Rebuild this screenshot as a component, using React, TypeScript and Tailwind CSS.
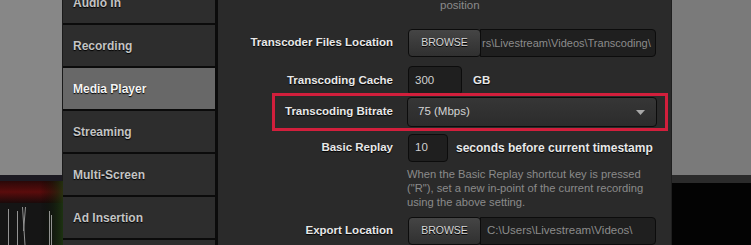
import React from "react";

const font = { fontFamily: '"Liberation Sans", Arial, sans-serif' };

const menu = ["Audio In", "Recording", "Media Player", "Streaming", "Multi-Screen", "Ad Insertion", "Web"];

function Label({ children, w = "w-[175px]" }: { children: React.ReactNode; w?: string }) {
  return (
    <div className={`${w} shrink-0 text-right text-[11.5px] font-bold text-[#e8e8e8] [text-shadow:0_1px_1px_#000]`}>
      {children}
    </div>
  );
}

function Browse() {
  return (
    <div className="w-[73px] h-[28px] shrink-0 rounded-[4px] border border-[#0c0c0c] bg-gradient-to-b from-[#454545] to-[#303030] flex items-center justify-center text-[10.5px] text-[#d8d8d8] [text-shadow:0_1px_0_#000]">
      BROWSE
    </div>
  );
}

export default function App() {
  return (
    <div className="w-[751px] h-[245px] flex overflow-hidden bg-black" style={font}>
      {/* left preview */}
      <div className="w-[63px] shrink-0 flex flex-col border-r border-[#1a1a1a]">
        <div className="h-[175px] bg-[#878787]" />
        <div className="h-[6px] bg-[#1c1a22]" />
        <div className="flex-1 relative bg-[#121010]">
          <svg width="63" height="64" viewBox="0 0 63 64" className="block">
            <defs>
              <linearGradient id="rd" x1="0" y1="0" x2="0" y2="1">
                <stop offset="0" stopColor="#2a0808" />
                <stop offset="0.5" stopColor="#5a0c0c" />
                <stop offset="1" stopColor="#1a0a0a" />
              </linearGradient>
              <linearGradient id="gr" x1="0" y1="0" x2="1" y2="0">
                <stop offset="0" stopColor="#000" stopOpacity="0" />
                <stop offset="1" stopColor="#1f3a10" stopOpacity="0.8" />
              </linearGradient>
            </defs>
            <rect x="0" y="0" width="63" height="22" fill="url(#rd)" />
            <rect x="0" y="22" width="63" height="42" fill="#151515" />
            <rect x="40" y="0" width="23" height="64" fill="url(#gr)" />
            <g stroke="#bdbdbd" strokeWidth="1" opacity="0.75">
              <line x1="8.5" y1="28" x2="8.5" y2="64" />
              <line x1="17.5" y1="30" x2="17.5" y2="64" />
              <line x1="22.5" y1="26" x2="25" y2="64" />
              <line x1="25.5" y1="26" x2="23.5" y2="50" />
              <line x1="49.5" y1="30" x2="49.5" y2="64" />
              <line x1="51.5" y1="34" x2="51.5" y2="64" />
            </g>
          </svg>
        </div>
      </div>

      {/* sidebar */}
      <div className="w-[155px] shrink-0 bg-[#0b0b0b] pr-[3px] overflow-hidden">
        <div className="flex flex-col gap-[2px] -mt-[18px]">
          {menu.map((m) => {
            const sel = m === "Media Player";
            return (
              <div
                key={m}
                className={`h-[41px] shrink-0 flex items-center pl-[10px] text-[12px] font-bold ${
                  sel ? "bg-[#686868] text-[#f4f4f4]" : "bg-[#2d2d2d] text-[#c4c4c4]"
                } [text-shadow:0_1px_1px_#000]`}
              >
                {m}
              </div>
            );
          })}
        </div>
      </div>

      {/* main panel */}
      <div className="w-[454px] shrink-0 bg-[#2a2a2a] flex flex-col border-r border-[#1e1e1e]">
        <div className="h-[12px] pl-[222px] -mt-[2px] text-[11.5px] leading-[14px] text-[#8a8a8a]">position</div>
        {/* row 1 */}
        <div className="flex items-center mt-[19px] h-[28px]">
          <Label>Transcoder Files Location</Label>
          <div className="ml-[15px] flex">
            <Browse />
            <div className="w-[176px] h-[28px] -ml-[1px] rounded-r-[4px] border border-[#0c0c0c] bg-[#1f1f1f] flex items-center overflow-hidden pl-[1px]">
              <span className="whitespace-nowrap text-[11px] text-[#8c8c8c]">rs\Livestream\Videos\Transcoding\</span>
            </div>
          </div>
        </div>
        {/* row 2 */}
        <div className="flex items-center mt-[9px] h-[29px]">
          <Label>Transcoding Cache</Label>
          <div className="ml-[15px] w-[54px] h-[29px] rounded-[4px] border border-[#0c0c0c] bg-[#1f1f1f] flex items-center pl-[6px] text-[11.5px] text-[#d0d0d0]">
            300
          </div>
          <div className="ml-[11px] text-[11.5px] font-bold text-[#e8e8e8] [text-shadow:0_1px_1px_#000]">GB</div>
        </div>
        {/* red highlighted row */}
        <div className="ml-[54px] -mt-[2px] w-[396px] h-[44px] border-[3px] border-[#d21f3c] flex items-center">
          <Label w="w-[118px]">Transcoding Bitrate</Label>
          <div className="ml-[14px] w-[250px] h-[30px] rounded-[4px] border border-[#0c0c0c] bg-gradient-to-b from-[#363636] to-[#2c2c2c] flex items-center justify-between pl-[10px] pr-[11px]">
            <span className="text-[11.5px] text-[#d4d4d4]">75 (Mbps)</span>
            <svg width="9" height="5" viewBox="0 0 9 5">
              <path d="M0 0 H9 L4.5 5 Z" fill="#a8a8a8" />
            </svg>
          </div>
        </div>
        {/* basic replay */}
        <div className="flex items-center mt-[3px] h-[28px]">
          <Label>Basic Replay</Label>
          <div className="ml-[15px] w-[40px] h-[28px] rounded-[4px] border border-[#0c0c0c] bg-[#1f1f1f] flex items-center pl-[6px] text-[11.5px] text-[#d0d0d0]">
            10
          </div>
          <div className="ml-[8px] text-[12px] font-bold text-[#e8e8e8] [text-shadow:0_1px_1px_#000] whitespace-nowrap">
            seconds before current timestamp
          </div>
        </div>
        <div className="ml-[189px] mt-[5px] text-[11.2px] leading-[14px] text-[#8a8a8a] w-[255px]">
          When the Basic Replay shortcut key is pressed
          <br />
          ("R"), set a new in-point of the current recording
          <br />
          using the above setting.
        </div>
        {/* export location */}
        <div className="flex items-center mt-[8px] h-[28px]">
          <Label>Export Location</Label>
          <div className="ml-[15px] flex">
            <Browse />
            <div className="w-[176px] h-[28px] -ml-[1px] rounded-r-[4px] border border-[#0c0c0c] bg-[#1f1f1f] flex items-center overflow-hidden pl-[6px]">
              <span className="whitespace-nowrap text-[11.5px] text-[#8c8c8c]">C:\Users\Livestream\Videos\</span>
            </div>
          </div>
        </div>
      </div>

      {/* right preview */}
      <div className="flex-1 flex flex-col">
        <div className="h-[175px] bg-[#7a7a7a]" />
        <div className="h-[8px] bg-[#2b2b2b]" />
        <div className="flex-1 bg-[#030303]" />
      </div>
    </div>
  );
}
